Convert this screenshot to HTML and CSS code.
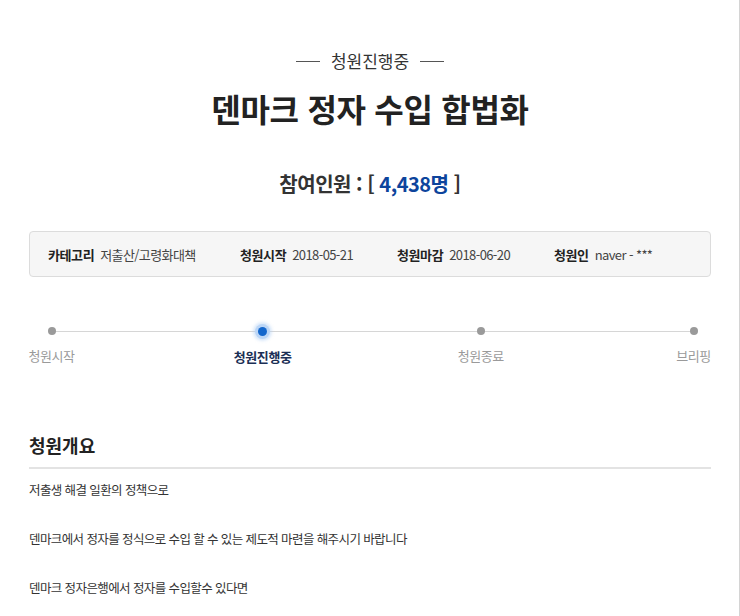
FILE: index.html
```html
<!DOCTYPE html>
<html lang="ko">
<head>
<meta charset="utf-8">
<title>덴마크 정자 수입 합법화</title>
<link rel="stylesheet" href="styles.css">
</head>
<body>
<div class="page">
  <div class="content">
    <div class="status"><span class="dash"></span><span class="status-text">청원진행중</span><span class="dash"></span></div>
    <h1 class="title">덴마크 정자 수입 합법화</h1>
    <h2 class="count">참여인원 : [ <span class="num">4,438명</span> ]</h2>

    <ul class="info">
      <li class="info-cat"><strong>카테고리</strong>저출산/고령화대책</li>
      <li class="info-start"><strong>청원시작</strong>2018-05-21</li>
      <li class="info-end"><strong>청원마감</strong>2018-06-20</li>
      <li class="info-user"><strong>청원인</strong>naver - ***</li>
    </ul>

    <div class="progress">
      <div class="track"></div>
      <div class="steps">
        <div class="step"><span class="dot"></span><span class="label">청원시작</span></div>
        <div class="sp1"></div>
        <div class="step active"><span class="dot"></span><span class="label">청원진행중</span></div>
        <div class="sp2"></div>
        <div class="step"><span class="dot"></span><span class="label">청원종료</span></div>
        <div class="sp3"></div>
        <div class="step"><span class="dot"></span><span class="label">브리핑</span></div>
      </div>
    </div>

    <h3 class="section-title">청원개요</h3>
    <div class="body-text">저출생 해결 일환의 정책으로

덴마크에서 정자를 정식으로 수입 할 수 있는 제도적 마련을 해주시기 바랍니다

덴마크 정자은행에서 정자를 수입할수 있다면</div>
  </div>
</div>
</body>
</html>
```

FILE: styles.css
```css
* { box-sizing: border-box; }
html, body { margin: 0; padding: 0; background: #fff; }
body {
  font-family: "Noto Sans CJK KR", "Noto Sans", sans-serif;
  color: #333;
  overflow: hidden;
}
.page {
  width: 740px;
  height: 616px;
  border-right: 1px solid #d4d4d4;
}
.content {
  width: 682px;
  margin-left: 29px;
  padding-top: 47px;
}
.status {
  display: flex;
  justify-content: center;
  align-items: center;
  gap: 11px;
  height: 28px;
}
.dash {
  display: block;
  width: 24px;
  height: 1px;
  background: #555;
}
.status-text {
  font-size: 17px;
  color: #333;
  line-height: 28px;
}
.title {
  margin: 9px 0 0;
  text-align: center;
  font-size: 32px;
  font-weight: 700;
  line-height: 48px;
  color: #222;
  letter-spacing: -0.3px;
}
.count {
  margin: 37px 0 0;
  text-align: center;
  font-size: 20px;
  font-weight: 700;
  line-height: 30px;
  color: #333;
  letter-spacing: -0.5px;
}
.count .num { color: #0d449c; }

.info {
  list-style: none;
  margin: 32px 0 0;
  padding: 0 0 0 18px;
  height: 46px;
  display: flex;
  align-items: center;
  background: #f6f6f6;
  border: 1px solid #dcdcdc;
  border-radius: 4px;
  font-size: 13px;
  color: #444;
  letter-spacing: -0.6px;
}
.info li { white-space: nowrap; }
.info strong { font-weight: 700; color: #222; margin-right: 6px; letter-spacing: -0.4px; }
.info-cat { width: 192px; }
.info-start { width: 157px; }
.info-end { width: 157px; }

.progress {
  position: relative;
  margin-top: 50px;
}
.track {
  position: absolute;
  left: 21px;
  right: 18px;
  top: 4px;
  height: 1px;
  background: #d6d6d6;
}
.steps {
  position: relative;
  display: grid;
  grid-template-columns: 45px 159fr 58px 166fr 45px 172fr 35px;
}
.step {
  display: flex;
  flex-direction: column;
  align-items: center;
}
.dot {
  display: block;
  width: 8px;
  height: 8px;
  border-radius: 50%;
  background: #9a9a9a;
}
.step.active .dot {
  width: 9px;
  height: 9px;
  margin-top: -0.5px;
  background: #1467cc;
  box-shadow: 0 0 0 3px #bcd6f6, 0 0 3px 5px rgba(180, 210, 245, 0.5);
}
.label {
  margin-top: 11px;
  font-size: 13px;
  line-height: 20px;
  color: #9a9a9a;
  white-space: nowrap;
  letter-spacing: -0.4px;
}
.step.active .label {
  color: #1b2f55;
  font-weight: 700;
}

.section-title {
  margin: 65px 0 0;
  font-size: 18px;
  font-weight: 700;
  line-height: 26px;
  color: #222;
  padding-bottom: 9px;
  border-bottom: 2px solid #e3e3e3;
}
.body-text {
  margin-top: 9px;
  white-space: pre-line;
  font-size: 12.5px;
  line-height: 24.5px;
  color: #333;
  letter-spacing: -0.6px;
}
```
